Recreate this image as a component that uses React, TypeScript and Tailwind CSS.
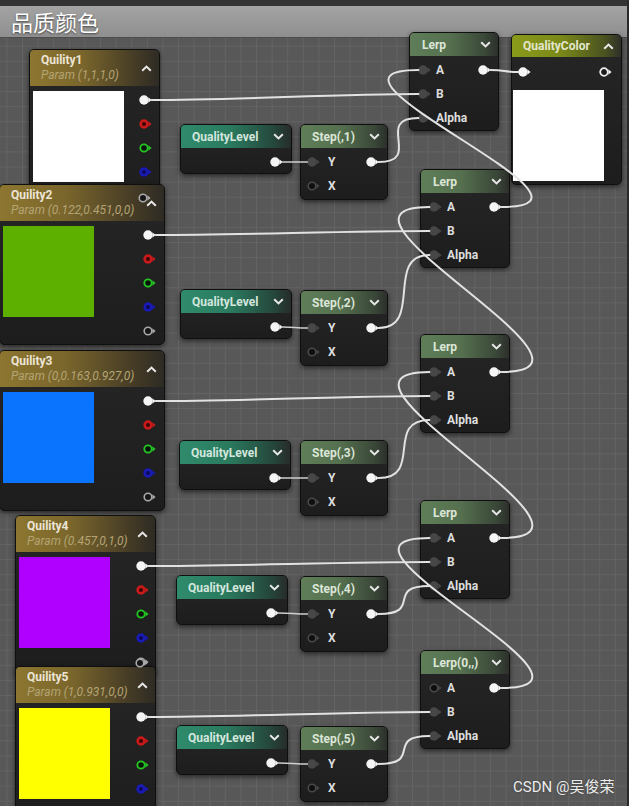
import React from "react";

type PinKind = "out" | "in" | "empty" | "red" | "green" | "blue" | "ring" | "whiteRing";

function Pin({ kind }: { kind: PinKind }) {
  let circle: React.ReactNode = null;
  let arrow = "#3a3a3a";
  switch (kind) {
    case "out":
      circle = <circle cx="5" cy="6" r="4.7" fill="#f5f5f5" />;
      arrow = "#f5f5f5";
      break;
    case "in":
      circle = <circle cx="5" cy="6" r="4.7" fill="#474747" />;
      arrow = "#474747";
      break;
    case "empty":
      circle = <circle cx="5" cy="6" r="3.8" fill="#0e0e0e" stroke="#4a4a4a" strokeWidth="1.6" />;
      arrow = "#444";
      break;
    case "red":
      circle = (
        <>
          <circle cx="5" cy="6" r="4.7" fill="#c81a1a" />
          <circle cx="5" cy="6" r="2" fill="#3a0606" />
        </>
      );
      arrow = "#c81a1a";
      break;
    case "green":
      circle = <circle cx="5" cy="6" r="3.7" fill="#0a140a" stroke="#24c424" strokeWidth="1.8" />;
      arrow = "#24c424";
      break;
    case "blue":
      circle = (
        <>
          <circle cx="5" cy="6" r="4.7" fill="#1a1ab4" />
          <circle cx="5" cy="6" r="2" fill="#0b0b5a" />
        </>
      );
      arrow = "#1a1ab4";
      break;
    case "ring":
      circle = <circle cx="5" cy="6" r="3.8" fill="#161616" stroke="#a9a9a9" strokeWidth="1.6" />;
      arrow = "#a9a9a9";
      break;
    case "whiteRing":
      circle = <circle cx="5" cy="6" r="3.8" fill="#1a1a1a" stroke="#ededed" strokeWidth="1.8" />;
      arrow = "#ededed";
      break;
  }
  return (
    <svg width="14" height="12" viewBox="0 0 14 12" className="block shrink-0">
      {circle}
      <path d="M9.4 3.3 L12.6 6 L9.4 8.7 Z" fill={arrow} />
    </svg>
  );
}

function ChevronDown() {
  return (
    <svg width="11" height="7" viewBox="0 0 11 7" className="block">
      <path d="M1.2 1.2 L5.5 5.4 L9.8 1.2" stroke="#e8e8e8" strokeWidth="2" fill="none" />
    </svg>
  );
}

function ChevronUp() {
  return (
    <svg width="11" height="7" viewBox="0 0 11 7" className="block">
      <path d="M1.2 5.8 L5.5 1.6 L9.8 5.8" stroke="#e8e8e8" strokeWidth="2" fill="none" />
    </svg>
  );
}

function ParamNode({
  pos,
  title,
  sub,
  color,
  pinMr,
}: {
  pos: string;
  title: string;
  sub: string;
  color: string;
  pinMr: string;
}) {
  const pins: PinKind[] = ["out", "red", "green", "blue", "ring"];
  return (
    <div
      className={`absolute ${pos} h-[161px] rounded-[5px] border border-[#0f0f0f] bg-[linear-gradient(#262626,#1d1d1d)] shadow-[0_2px_5px_rgba(0,0,0,0.55)] overflow-hidden flex flex-col`}
    >
      <div className="h-[36px] shrink-0 flex items-start justify-between pl-[11px] pr-[7px] pt-[3px] bg-[linear-gradient(90deg,#8c7630_0%,#7a662c_40%,#473d26_80%,#2e2b24_100%)]">
        <div className="flex flex-col">
          <span className="text-[12px] leading-[15px] font-bold text-[#ece5d6]">{title}</span>
          <span className="text-[12px] leading-[15px] italic text-[#b4a474]">{sub}</span>
        </div>
        <span className="mt-[12px]">
          <ChevronUp />
        </span>
      </div>
      <div className="flex">
        <div className={`ml-[3px] mt-[5px] w-[91px] h-[91px] shrink-0 ${color}`} />
        <div className={`ml-auto ${pinMr} pt-[2px] flex flex-col`}>
          {pins.map((k) => (
            <div key={k} className="h-[24px] flex items-center">
              <Pin kind={k} />
            </div>
          ))}
        </div>
      </div>
    </div>
  );
}

function QLNode({ pos }: { pos: string }) {
  return (
    <div
      className={`absolute ${pos} w-[112px] h-[50px] rounded-[5px] border border-[#0f0f0f] bg-[linear-gradient(#262626,#1d1d1d)] shadow-[0_2px_5px_rgba(0,0,0,0.55)] overflow-hidden flex flex-col`}
    >
      <div className="h-[23px] shrink-0 flex items-center justify-between pl-[11px] pr-[7px] bg-[linear-gradient(90deg,#2f8b6b_0%,#2a7a5e_45%,#25463b_85%,#272c2a_100%)]">
        <span className="text-[12px] font-bold text-[#d3e6dd]">QualityLevel</span>
        <ChevronDown />
      </div>
      <div className="h-[26px] flex items-center justify-end pr-[7px] pt-[2px]">
        <Pin kind="out" />
      </div>
    </div>
  );
}

function StepNode({ pos, title }: { pos: string; title: string }) {
  return (
    <div
      className={`absolute ${pos} w-[88px] h-[76px] rounded-[5px] border border-[#0f0f0f] bg-[linear-gradient(#262626,#1d1d1d)] shadow-[0_2px_5px_rgba(0,0,0,0.55)] overflow-hidden flex flex-col`}
    >
      <div className="h-[23px] shrink-0 flex items-center justify-between pl-[11px] pr-[7px] bg-[linear-gradient(90deg,#5f7e58_0%,#55704f_45%,#3a4838_85%,#2c302b_100%)]">
        <span className="text-[12px] font-bold text-[#dce6d8]">{title}</span>
        <ChevronDown />
      </div>
      <div className="pt-[2px] flex flex-col">
        <div className="h-[24px] flex items-center pl-[6px] pr-[7px]">
          <Pin kind="in" />
          <span className="ml-[7px] text-[12px] font-bold text-[#dedede]">Y</span>
          <span className="ml-auto">
            <Pin kind="out" />
          </span>
        </div>
        <div className="h-[24px] flex items-center pl-[6px]">
          <Pin kind="empty" />
          <span className="ml-[7px] text-[12px] font-bold text-[#dedede]">X</span>
        </div>
      </div>
    </div>
  );
}

function LerpNode({ pos, title, aKind }: { pos: string; title: string; aKind: PinKind }) {
  return (
    <div
      className={`absolute ${pos} w-[90px] h-[99px] rounded-[5px] border border-[#0f0f0f] bg-[linear-gradient(#262626,#1d1d1d)] shadow-[0_2px_5px_rgba(0,0,0,0.55)] overflow-hidden flex flex-col`}
    >
      <div className="h-[23px] shrink-0 flex items-center justify-between pl-[12px] pr-[7px] bg-[linear-gradient(90deg,#5f7e58_0%,#55704f_45%,#3a4838_85%,#2c302b_100%)]">
        <span className="text-[12px] font-bold text-[#dce6d8]">{title}</span>
        <ChevronDown />
      </div>
      <div className="pt-[2px] flex flex-col">
        <div className="h-[24px] flex items-center pl-[8px] pr-[6px]">
          <Pin kind={aKind} />
          <span className="ml-[4px] text-[12px] font-bold text-[#dedede]">A</span>
          <span className="ml-auto">
            <Pin kind="out" />
          </span>
        </div>
        <div className="h-[24px] flex items-center pl-[8px]">
          <Pin kind="in" />
          <span className="ml-[4px] text-[12px] font-bold text-[#dedede]">B</span>
        </div>
        <div className="h-[24px] flex items-center pl-[8px]">
          <Pin kind="in" />
          <span className="ml-[4px] text-[12px] font-bold text-[#dedede]">Alpha</span>
        </div>
      </div>
    </div>
  );
}

function QualityColorNode() {
  return (
    <div className="absolute left-[511px] top-[34px] w-[111px] h-[151px] rounded-[5px] border border-[#0f0f0f] bg-[linear-gradient(#262626,#1d1d1d)] shadow-[0_2px_5px_rgba(0,0,0,0.55)] overflow-hidden flex flex-col">
      <div className="h-[22px] shrink-0 flex items-center justify-between pl-[11px] pr-[7px] bg-[linear-gradient(90deg,#8a9a1a_0%,#7a8818_45%,#4a5220_85%,#2e302a_100%)]">
        <span className="text-[12px] font-bold text-[#e2e6cc]">QualityColor</span>
        <ChevronUp />
      </div>
      <div className="pt-[3px] h-[27px] flex items-center pl-[6px] pr-[8px] justify-between">
        <Pin kind="out" />
        <Pin kind="whiteRing" />
      </div>
      <div className="ml-[1px] mt-[6px] w-[91px] h-[91px] bg-white" />
    </div>
  );
}

type P = { x: number; y: number };
const LERPS: P[] = [
  { x: 409, y: 32 },
  { x: 420, y: 169 },
  { x: 420, y: 334 },
  { x: 420, y: 500 },
  { x: 420, y: 650 },
];
const STEPS: P[] = [
  { x: 300, y: 124 },
  { x: 300, y: 290 },
  { x: 300, y: 440 },
  { x: 300, y: 576 },
  { x: 300, y: 726 },
];
const QLS: P[] = [
  { x: 180, y: 124 },
  { x: 180, y: 289 },
  { x: 179, y: 440 },
  { x: 176, y: 575 },
  { x: 176, y: 725 },
];
const PARAM_OUT: P[] = [
  { x: 144, y: 100 },
  { x: 148, y: 235 },
  { x: 148, y: 401 },
  { x: 141, y: 566 },
  { x: 141, y: 717 },
];

function curve(x0: number, y0: number, x1: number, y1: number, t: number) {
  return `M ${x0} ${y0} C ${x0 + t} ${y0}, ${x1 - t} ${y1}, ${x1} ${y1}`;
}

function Wires() {
  const paths: { d: string; w: number; c: string }[] = [];
  for (let i = 0; i < 5; i++) {
    const L = LERPS[i];
    const S = STEPS[i];
    const Q = QLS[i];
    const po = PARAM_OUT[i];
    paths.push({ d: curve(po.x + 7.6, po.y, L.x + 9.4, L.y + 62, 80), w: 2, c: "#e2e2e2" });
    paths.push({ d: curve(S.x + 78.6, S.y + 38, L.x + 9.4, L.y + 86, 45), w: 2, c: "#e2e2e2" });
    paths.push({ d: curve(Q.x + 102.6, Q.y + 38, S.x + 7.4, S.y + 38, 12), w: 1.5, c: "#cfcfcf" });
    if (i < 4) {
      const N = LERPS[i + 1];
      paths.push({ d: curve(N.x + 81.6, N.y + 38, L.x + 9.4, L.y + 38, 130), w: 2, c: "#e2e2e2" });
    }
  }
  paths.push({ d: curve(LERPS[0].x + 81.6, LERPS[0].y + 38, 518.4, 72, 15), w: 2, c: "#e2e2e2" });
  return (
    <svg className="absolute left-0 top-0 pointer-events-none" width="629" height="806">
      {paths.map((p, i) => (
        <path key={i} d={p.d} stroke={p.c} strokeWidth={p.w} fill="none" strokeLinecap="round" />
      ))}
    </svg>
  );
}

function Grid() {
  return (
    <svg className="absolute left-0 top-[38px]" width="627" height="768">
      <defs>
        <pattern id="ggrid" width="15.6" height="15.1" patternUnits="userSpaceOnUse" x="6.4" y="7.7">
          <rect x="0" y="0" width="15.6" height="1" fill="#636363" />
          <rect x="0" y="0" width="1" height="15.1" fill="#636363" />
        </pattern>
      </defs>
      <rect x="0" y="0" width="627" height="768" fill="#585858" />
      <rect x="0" y="0" width="627" height="768" fill="url(#ggrid)" />
    </svg>
  );
}

export default function App() {
  return (
    <div className="relative w-[629px] h-[806px] overflow-hidden flex bg-[#585858] font-['Roboto','Liberation_Sans',sans-serif]">
      <div className="w-[627px] flex flex-col">
        <div className="h-[6px] bg-[#333333]" />
        <div className="h-[32px] flex items-center pl-[11px] bg-[linear-gradient(#a3a3a3,#8f8f8f)] border-b border-[#4c4c4c]">
          <span className="text-[22px] text-white font-['Noto_Sans_CJK_SC',sans-serif] [text-shadow:0_1px_2px_rgba(0,0,0,0.55)]">
            品质颜色
          </span>
        </div>
        <div className="flex-1" />
      </div>
      <div className="w-[2px] bg-[#2a2a2a]" />

      <Grid />

      <ParamNode pos="left-[29px] top-[49px] w-[131px]" title="Quility1" sub="Param (1,1,1,0)" color="bg-white" pinMr="mr-[6px]" />
      <ParamNode pos="left-[-1px] top-[184px] w-[166px]" title="Quility2" sub="Param (0.122,0.451,0,0)" color="bg-[#5db000]" pinMr="mr-[7px]" />
      <ParamNode pos="left-[-1px] top-[350px] w-[166px]" title="Quility3" sub="Param (0,0.163,0.927,0)" color="bg-[#0a74ff]" pinMr="mr-[7px]" />
      <ParamNode pos="left-[15px] top-[515px] w-[141px]" title="Quility4" sub="Param (0.457,0,1,0)" color="bg-[#b000ff]" pinMr="mr-[5px]" />
      <ParamNode pos="left-[15px] top-[666px] w-[141px]" title="Quility5" sub="Param (1,0.931,0,0)" color="bg-[#ffff00]" pinMr="mr-[5px]" />

      <div className="absolute left-[138px] top-[192px]">
        <Pin kind="ring" />
      </div>
      <div className="absolute left-[135px] top-[657px]">
        <Pin kind="ring" />
      </div>

      <QLNode pos="left-[180px] top-[124px]" />
      <QLNode pos="left-[180px] top-[289px]" />
      <QLNode pos="left-[179px] top-[440px]" />
      <QLNode pos="left-[176px] top-[575px]" />
      <QLNode pos="left-[176px] top-[725px]" />

      <StepNode pos="left-[300px] top-[124px]" title="Step(,1)" />
      <StepNode pos="left-[300px] top-[290px]" title="Step(,2)" />
      <StepNode pos="left-[300px] top-[440px]" title="Step(,3)" />
      <StepNode pos="left-[300px] top-[576px]" title="Step(,4)" />
      <StepNode pos="left-[300px] top-[726px]" title="Step(,5)" />

      <LerpNode pos="left-[409px] top-[32px]" title="Lerp" aKind="in" />
      <LerpNode pos="left-[420px] top-[169px]" title="Lerp" aKind="in" />
      <LerpNode pos="left-[420px] top-[334px]" title="Lerp" aKind="in" />
      <LerpNode pos="left-[420px] top-[500px]" title="Lerp" aKind="in" />
      <LerpNode pos="left-[420px] top-[650px]" title="Lerp(0,,)" aKind="empty" />

      <QualityColorNode />

      <Wires />

      <div className="absolute left-[513px] top-[777px] text-[15px] leading-[20px] text-[#ececec] font-['Roboto','Noto_Sans_CJK_SC',sans-serif] [text-shadow:0_0_2px_rgba(0,0,0,0.35)]">
        CSDN @吴俊荣
      </div>
    </div>
  );
}
